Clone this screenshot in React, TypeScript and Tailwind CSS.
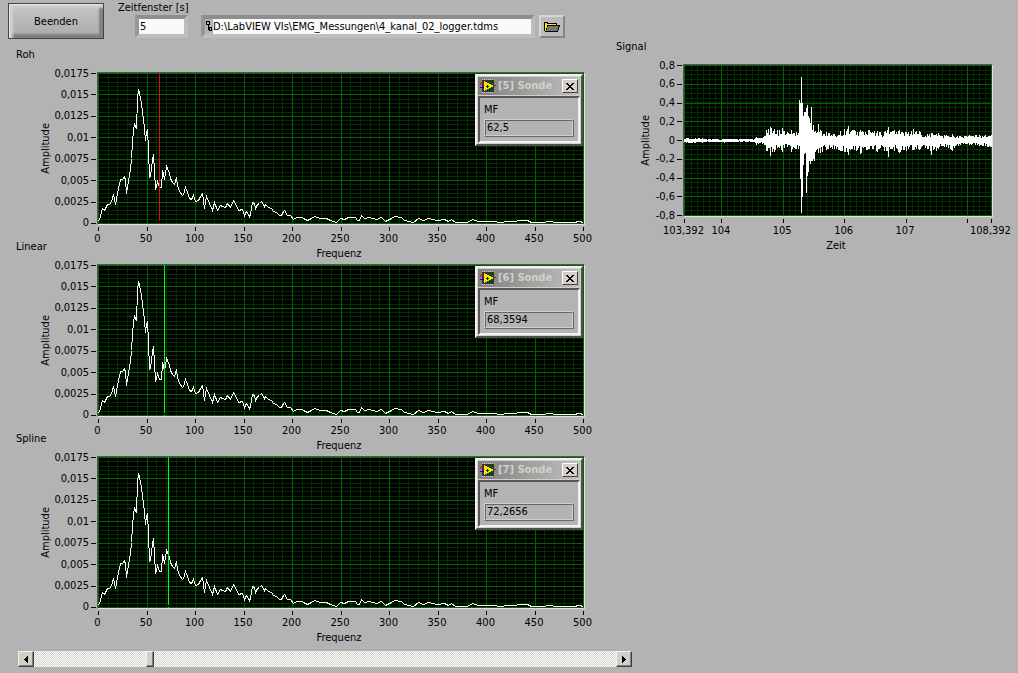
import { useState } from 'react';
import type { ReactNode } from 'react';

interface Tick {
  value: number;
  label: string;
}

const PLOT_H = 151;

const amplitudeTicks: Tick[] = [
  { value: 0.0175, label: '0,0175' },
  { value: 0.015, label: '0,015' },
  { value: 0.0125, label: '0,0125' },
  { value: 0.01, label: '0,01' },
  { value: 0.0075, label: '0,0075' },
  { value: 0.005, label: '0,005' },
  { value: 0.0025, label: '0,0025' },
  { value: 0, label: '0' },
];

const frequencyTicks: Tick[] = [0, 50, 100, 150, 200, 250, 300, 350, 400, 450, 500].map((value) => ({
  value,
  label: String(value),
}));

const voltageTicks: Tick[] = [0.8, 0.6, 0.4, 0.2, 0, -0.2, -0.4, -0.6, -0.8].map((value) => ({
  value,
  label: String(value).replace('.', ','),
}));

const timeTicks: Tick[] = [
  { value: 103.392, label: '103,392' },
  { value: 104, label: '104' },
  { value: 105, label: '105' },
  { value: 106, label: '106' },
  { value: 107, label: '107' },
  { value: 108, label: '' },
  { value: 108.392, label: '108,392' },
];

const spectrum =
  '0,148 2,143 4,135 6,137 9,131 11,131 13,128 15,121 17,131 20,115 22,106 24,106 26,103 27,107 28,120 30,108 32,96 33,85 34,68 35,57 36,50 37,54 38,55 39,26 40,16 41,20 42,24 43,31 44,38 46,55 47,67 48,59 49,56 50,77 51,104 52,102 53,95 54,87 55,81 56,97 57,115 58,113 59,108 61,114 63,114 64,97 65,100 66,106 68,93 69,95 71,100 72,105 74,109 76,111 78,104 79,112 81,118 84,122 85,121 87,114 89,119 91,125 93,126 95,122 97,128 100,127 102,123 104,120 106,135 108,123 111,130 114,137 116,129 119,137 122,132 124,133 127,134 129,130 132,134 135,127 137,130 140,137 144,136 146,142 148,138 151,143 152,141 154,129 156,130 157,135 159,131 161,130 163,128 166,133 167,131 170,134 173,135 175,138 178,139 181,142 183,142 185,138 186,137 189,142 192,142 195,146 198,144 204,144 205,145 209,147 213,145 216,143 222,145 228,145 232,147 238,149 242,145 246,146 250,144 257,144 259,147 261,147 263,142 266,145 271,144 278,146 283,144 287,148 293,145 296,143 303,144 306,147 315,149 320,145 325,147 330,145 339,147 346,146 350,148 353,146 357,149 369,149 374,146 380,148 395,148 402,149 409,148 429,147 433,149 445,149 450,148 459,149 469,149 475,149 481,148 485,149';

// column, height above zero, depth below zero
const envelope = [
  [0, 1, 1], [2, 2, 2], [18, 2, 2], [22, 1, 1], [40, 1, 2], [50, 1, 1], [70, 1, 1], [72, 3, 4], [76, 2, 2],
  [80, 4, 4], [82, 10, 10], [86, 13, 15], [90, 11, 11], [95, 10, 7], [98, 12, 11], [103, 8, 6], [107, 10, 11],
  [112, 8, 8], [114, 7, 8], [115, 40, 5], [116, 37, 38], [117, 63, 72], [118, 37, 56], [119, 24, 24],
  [120, 28, 13], [121, 28, 12], [122, 32, 52], [123, 35, 35], [124, 24, 31], [125, 22, 20], [126, 17, 23],
  [127, 33, 20], [128, 10, 20], [129, 15, 18], [130, 8, 20], [131, 9, 11], [132, 7, 9], [133, 8, 8],
  [134, 16, 12], [135, 8, 7], [136, 10, 12], [142, 8, 9], [150, 6, 8], [156, 9, 10], [164, 14, 14], [170, 10, 9],
  [176, 10, 13], [185, 10, 8], [193, 9, 11], [200, 8, 10], [204, 13, 16], [210, 10, 10], [215, 10, 12],
  [222, 8, 10], [229, 11, 9], [235, 9, 9], [243, 6, 8], [247, 7, 14], [254, 7, 8], [262, 5, 6], [268, 6, 10],
  [276, 4, 4], [285, 5, 4], [295, 5, 5], [307, 6, 7],
];

function jitter(n: number): number {
  const s = Math.sin(n * 127.1) * 43758.5453;
  return 0.4 + 0.6 * (s - Math.floor(s));
}

function signalPath(): string {
  let d = '';
  for (let i = 0; i < envelope.length - 1; i++) {
    const [x0, up0, down0] = envelope[i];
    const [x1, up1, down1] = envelope[i + 1];
    for (let x = x0; x < x1; x++) {
      const f = (x - x0) / (x1 - x0);
      const key = x === x0;
      const up = (up0 + (up1 - up0) * f) * (key ? 1 : jitter(x));
      const down = (down0 + (down1 - down0) * f) * (key ? 1 : jitter(x + 500));
      d += `M${x + 0.5} ${75 - Math.round(up)}V${76 + Math.round(down)}`;
    }
  }
  return d + 'M307.5 70V82';
}

function steps(from: number, to: number, step: number): number[] {
  const out: number[] = [];
  const count = Math.floor((to - from) / step + 0.001);
  for (let i = 0; i <= count; i++) out.push(from + i * step);
  return out;
}

function place(value: number, from: number, to: number, size: number): number {
  return Math.round(((value - from) / (to - from)) * (size - 1)) + 0.5;
}

interface ChartProps {
  title: string;
  xTitle: string;
  xTicks: Tick[];
  yTicks: Tick[];
  xMinor: number[];
  yMinor: number[];
  width: number;
  axisClass: string;
  children: ReactNode;
  overlay?: ReactNode;
}

function Chart({ title, xTitle, xTicks, yTicks, xMinor, yMinor, width, axisClass, children, overlay }: ChartProps) {
  const x0 = xTicks[0].value;
  const x1 = xTicks[xTicks.length - 1].value;
  const y0 = yTicks[0].value;
  const y1 = yTicks[yTicks.length - 1].value;
  const vLines = (values: number[]) =>
    values.map((v) => `M${place(v, x0, x1, width)} 0V${PLOT_H}`).join('');
  const hLines = (values: number[]) =>
    values.map((v) => `M0 ${place(v, y0, y1, PLOT_H)}H${width}`).join('');

  return (
    <figure className="h-48">
      <figcaption>{title}</figcaption>
      <div className="mt-[9px] flex pl-[22px]">
        <div className="flex h-[153px] w-4 items-center justify-center">
          <span className="rotate-180 [writing-mode:vertical-rl]">Amplitude</span>
        </div>
        <div className={`mt-px h-[150px] shrink-0 ${axisClass}`}>
          {yTicks.map((tick, i) => (
            <div
              key={tick.value}
              style={{ height: `${i < yTicks.length - 1 ? ((yTicks[i + 1].value - tick.value) / (y1 - y0)) * 100 : 0}%` }}
            >
              <div className="flex h-px items-center justify-end gap-0.5 pr-px">
                <span className="whitespace-nowrap">{tick.label}</span>
                <span className="h-px w-[5px] shrink-0 bg-black" />
              </div>
            </div>
          ))}
        </div>
        <div className="min-w-0 flex-1">
          <div className="relative border border-t-[#555] border-r-[#e4e4e4] border-b-[#e4e4e4] border-l-[#555] bg-black">
            <svg
              viewBox={`0 0 ${width} ${PLOT_H}`}
              preserveAspectRatio="none"
              shapeRendering="crispEdges"
              fill="none"
              className="block h-[151px] w-full"
            >
              <path d={vLines(xMinor) + hLines(yMinor)} stroke="#003200" />
              <path d={vLines(xTicks.map((t) => t.value)) + hLines(yTicks.map((t) => t.value))} stroke="#006400" />
              {children}
            </svg>
            {overlay}
          </div>
          <div className="mt-0.5 mr-0.5 ml-px flex">
            {xTicks.map((tick, i) => (
              <div
                key={tick.value}
                style={{ width: `${i < xTicks.length - 1 ? ((xTicks[i + 1].value - tick.value) / (x1 - x0)) * 100 : 0}%` }}
              >
                <div className="flex w-px flex-col items-center">
                  <span className="h-1 w-px bg-black" />
                  <span className="h-3.5 pr-0.5 whitespace-nowrap">{tick.label}</span>
                </div>
              </div>
            ))}
          </div>
          <div className="mt-px pr-1 text-center">{xTitle}</div>
        </div>
      </div>
    </figure>
  );
}

function ProbeIcon() {
  return (
    <svg width="16" height="14" viewBox="0 0 16 14" shapeRendering="crispEdges" aria-hidden="true">
      <path d="M2 1h12v12H2z" fill="#333" />
      <path d="M2 .5h12M2 13.5h12" stroke="#ccc" strokeDasharray="1 1" />
      <path d="M9 2h5v9H9z" fill="#064d06" />
      <path d="M4 2h1v1h2v1h2v1h2v1h2v2h-2v1H9v1H7v1H5v1H4z" fill="#ffe600" />
      <path d="M7 6h1v1h1v1H8v1H7V8H6V7h1z" fill="#222" />
      <path d="M0 4.5h4M13 6.500h3" stroke="#e00000" />
      <path d="M0 8.5h4" stroke="#0000e0" />
    </svg>
  );
}

function Probe({ id, value }: { id: number; value: string }) {
  return (
    <section className="absolute top-px right-px flex h-[72px] w-[108px] flex-col border-2 border-t-[#f4f2ee] border-r-[#505050] border-b-[#505050] border-l-[#f4f2ee] bg-[#d4d0c8] p-px">
      <header className="flex h-[18px] shrink-0 items-center bg-linear-to-r from-[#808080] to-[#c0c0c0] px-0.5">
        <ProbeIcon />
        <h2 className="ml-0.5 flex-1 font-bold whitespace-nowrap text-[#d4d0c8]">[{id}] Sonde</h2>
        <button
          type="button"
          aria-label="Schließen"
          className="flex h-3.5 w-4 items-center justify-center border border-t-white border-r-[#404040] border-b-[#404040] border-l-white bg-[#d4d0c8]"
        >
          <svg width="8" height="7" viewBox="0 0 8 7" shapeRendering="crispEdges" aria-hidden="true">
            <path
              d="M0 0h2v1h1v1h2V1h1V0h2v1H7v1H6v1H5v1h1v1h1v1h1v1H6V6H5V5H3v1H2v1H0V6h1V5h1V4h1V3H2V2H1V1H0z"
              fill="#000"
            />
          </svg>
        </button>
      </header>
      <div className="mt-px flex-1 border-2 border-t-[#555] border-r-[#f4f2ee] border-b-[#f4f2ee] border-l-[#555] bg-[#b3b3b3] px-1 pt-1">
        <label className="block">
          MF
          <span className="mt-px block border border-t-[#d0d0d0] border-r-[#666] border-b-[#666] border-l-[#d0d0d0]">
            <input
              readOnly
              value={value}
              className="block h-4 w-full border border-t-[#666] border-r-[#d0d0d0] border-b-[#d0d0d0] border-l-[#666] bg-transparent px-px outline-none"
            />
          </span>
        </label>
      </div>
    </section>
  );
}

interface SpectrumChartProps {
  title: string;
  id: number;
  frequency: number;
  label: string;
  color: string;
}

function SpectrumChart({ title, id, frequency, label, color }: SpectrumChartProps) {
  const x = place(frequency, 0, 500, 486);
  return (
    <Chart
      title={title}
      xTitle="Frequenz"
      xTicks={frequencyTicks}
      yTicks={amplitudeTicks}
      xMinor={steps(0, 500, 10)}
      yMinor={steps(0, 0.0175, 0.0005)}
      width={486}
      axisClass="w-[43px]"
      overlay={<Probe id={id} value={label} />}
    >
      <polyline points={spectrum} stroke="#fff" transform="translate(.5 .5)" />
      <path d={`M${x} 0V148M${x} 150V151`} stroke={color} />
    </Chart>
  );
}

const well = 'border-4 border-t-[#8e8e8e] border-r-[#bebebe] border-b-[#bebebe] border-l-[#979797]';
const arrowButton =
  'flex size-4 shrink-0 items-center justify-center border border-t-[#f4f2ee] border-r-[#404040] border-b-[#404040] border-l-[#f4f2ee] bg-[#d4d0c8] shadow-[inset_-1px_-1px_0_#808080]';

function Toolbar() {
  return (
    <header className="flex h-[47px] items-start pr-5 pl-2">
      <button
        type="button"
        className="mt-[3px] h-9 w-24 shrink-0 border border-[#444] bg-linear-to-b from-[#c6c6c6] to-[#aaa] pt-0.5 shadow-[inset_1px_1px_0_#e6e6e6,inset_4px_4px_2px_#cfcfcf,inset_-4px_-4px_2px_#808080]"
      >
        Beenden
      </button>
      <div className="ml-3.5 flex w-[70px] shrink-0 flex-col items-end">
        <label htmlFor="window" className="h-[15px] self-start whitespace-nowrap">
          Zeitfenster [s]
        </label>
        <input id="window" defaultValue="5" className={`h-[23px] w-[53px] bg-[#fafafa] px-px outline-none ${well}`} />
      </div>
      <div className={`mt-[15px] ml-[13px] flex h-[23px] min-w-0 flex-1 ${well}`}>
        <svg width="8" height="15" viewBox="0 0 8 15" fill="none" stroke="#000" shapeRendering="crispEdges" className="shrink-0" aria-hidden="true">
          <path d="M1.5 2.5h3v3h-3zM3.5 6v5M4 10.5h1M4.5 8.5h2v3h-2z" />
        </svg>
        <input
          aria-label="Dateipfad"
          defaultValue="D:\LabVIEW VIs\EMG_Messungen\4_kanal_02_logger.tdms"
          className="min-w-0 flex-1 bg-[#fafafa] outline-none"
        />
      </div>
      <button
        type="button"
        aria-label="Datei öffnen"
        className="mt-[15px] ml-1 flex h-[23px] w-[26px] shrink-0 items-center justify-center border-2 border-t-[#d6d6d6] border-r-[#848484] border-b-[#848484] border-l-[#d6d6d6] bg-[#bcbcbc]"
      >
        <svg width="16" height="10" viewBox="0 0 16 10" shapeRendering="crispEdges" aria-hidden="true">
          <path d="M0 0h4v1h9v2h3v2h-1v3h-1v2H1V9H0z" fill="#000" />
          <path d="M1 1h2v1h9v1H3v3H2v3H1z" fill="#ffe600" />
          <path d="M4 4h11v1h-1v3h-1v1H2V8h1V5h1z" fill="#777" />
        </svg>
      </button>
    </header>
  );
}

function Scrollbar() {
  const [position, setPosition] = useState(195);
  return (
    <div className="flex h-4 pl-[18px]">
      <button type="button" aria-label="Zurück" className={arrowButton}>
        <svg width="4" height="7" viewBox="0 0 4 7" shapeRendering="crispEdges" aria-hidden="true">
          <path d="M4 0v7L0 4V3z" />
        </svg>
      </button>
      <input
        type="range"
        aria-label="Zeitposition"
        min={0}
        max={1000}
        value={position}
        onChange={(e) => setPosition(Number(e.target.value))}
        className="m-0 h-4 min-w-0 flex-1 appearance-none bg-[conic-gradient(#fff_25%,#d4d0c8_0_50%,#fff_0_75%,#d4d0c8_0)] bg-size-[2px_2px] [&::-webkit-slider-thumb]:h-4 [&::-webkit-slider-thumb]:w-2 [&::-webkit-slider-thumb]:appearance-none [&::-webkit-slider-thumb]:border [&::-webkit-slider-thumb]:border-t-[#f4f2ee] [&::-webkit-slider-thumb]:border-r-[#404040] [&::-webkit-slider-thumb]:border-b-[#404040] [&::-webkit-slider-thumb]:border-l-[#f4f2ee] [&::-webkit-slider-thumb]:bg-[#d4d0c8] [&::-webkit-slider-thumb]:shadow-[inset_-1px_-1px_0_#808080]"
      />
      <button type="button" aria-label="Vor" className={arrowButton}>
        <svg width="4" height="7" viewBox="0 0 4 7" shapeRendering="crispEdges" aria-hidden="true">
          <path d="M0 0v7l4-3V3z" />
        </svg>
      </button>
    </div>
  );
}

export default function App() {
  return (
    <main className="min-h-screen bg-[#b3b3b3] font-['DejaVu_Sans_Condensed','Noto_Sans',sans-serif] text-[11px] leading-4 text-black">
      <div className="grid grid-cols-[585fr_433fr]">
        <div className="min-w-0">
          <Toolbar />
          <div className="pl-4">
            <SpectrumChart title="Roh" id={5} frequency={62.5} label="62,5" color="#e01010" />
            <SpectrumChart title="Linear" id={6} frequency={68.3594} label="68,3594" color="#00ff00" />
            <SpectrumChart title="Spline" id={7} frequency={72.2656} label="72,2656" color="#00ff00" />
          </div>
        </div>
        <div className="min-w-0 pt-[39px] pr-[25px] pl-[31px]">
          <Chart
            title="Signal"
            xTitle="Zeit"
            xTicks={timeTicks}
            yTicks={voltageTicks}
            xMinor={steps(103.4, 108.392, 0.1)}
            yMinor={steps(-0.8, 0.8, 0.05)}
            width={308}
            axisClass="w-[29px]"
          >
            <path d={signalPath()} stroke="#fff" />
          </Chart>
        </div>
      </div>
      <div className="mt-7 grid grid-cols-[632fr_386fr]">
        <Scrollbar />
      </div>
    </main>
  );
}
